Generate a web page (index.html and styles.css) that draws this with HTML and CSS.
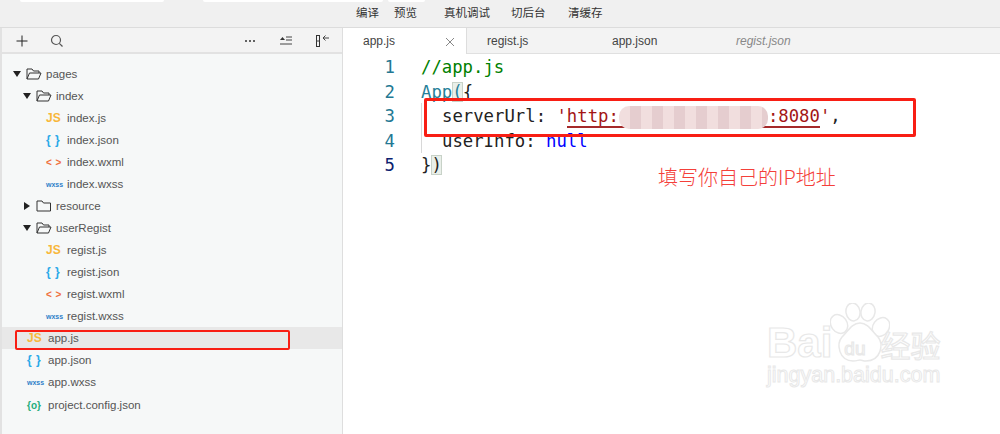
FILE: index.html
```html
<!DOCTYPE html>
<html lang="zh">
<head>
<meta charset="utf-8">
<title>app.js</title>
<link rel="stylesheet" href="styles.css">
</head>
<body>
<div class="app">
  <header class="topbar">
    <div class="top-stubs"><i class="stub s1"></i><i class="stub s2"></i><i class="stub s3"></i></div>
    <nav class="actions">
      <span class="a1">编译</span><span class="a2">预览</span><span class="a3">真机调试</span><span class="a4">切后台</span><span class="a5">清缓存</span>
    </nav>
  </header>
  <main class="main">
    <aside class="side">
      <div class="side-tools">
        <svg class="ic-plus" width="14" height="14" viewBox="0 0 14 14"><path d="M1.500 7h11M7 1.500v11" stroke="#222" fill="none"/></svg>
        <svg class="ic-search" width="14" height="14" viewBox="0 0 14 14"><circle cx="6" cy="6" r="4.500" stroke="#555" stroke-width="1.200" fill="none"/><path d="M9.300 9.300l3.200 3.200" stroke="#555" stroke-width="1.200" fill="none"/></svg>
        <span class="grow"></span>
        <svg class="ic-dots" width="10" height="4" viewBox="0 0 10 4"><path d="M0 2h2M4 2h2M8 2h2" stroke="#333" stroke-width="1.400" fill="none"/></svg>
        <svg class="ic-sort" width="13" height="10" viewBox="0 0 13 10"><path d="M0 4l2.500-3 2.500 3z" fill="#333"/><path d="M6 1h6M6 4h6M0 8h12" stroke="#444" fill="none"/></svg>
        <svg class="ic-col" width="14" height="14" viewBox="0 0 14 14"><rect x="0.500" y="1.500" width="3" height="11" stroke="#333" fill="none"/><path d="M13 4H7M9.500 1.500L7 4l2.500 2.500M0.500 7h3" stroke="#444" fill="none"/></svg>
      </div>
      <ul class="tree">
        <li class="row l0"><svg class="caret" width="8" height="6" viewBox="0 0 8 6"><path d="M0 0h8L4 6z"/></svg><svg class="open" width="16" height="12" viewBox="0 0 16 12"><path d="M1 11V1h5l1.500 2H13v2M1 11h11.500L15 5H3.500L1 11z" stroke="#333" fill="none"/></svg><span>pages</span></li>
        <li class="row l1"><svg class="caret" width="8" height="6" viewBox="0 0 8 6"><path d="M0 0h8L4 6z"/></svg><svg class="open" width="16" height="12" viewBox="0 0 16 12"><path d="M1 11V1h5l1.500 2H13v2M1 11h11.500L15 5H3.500L1 11z" stroke="#333" fill="none"/></svg><span>index</span></li>
        <li class="row l2"><b class="fi js">JS</b><span>index.js</span></li>
        <li class="row l2"><b class="fi json">{ }</b><span>index.json</span></li>
        <li class="row l2"><b class="fi wxml">&lt; &gt;</b><span>index.wxml</span></li>
        <li class="row l2"><b class="fi wxss">wxss</b><span>index.wxss</span></li>
        <li class="row l1"><svg class="caret side-caret" width="6" height="8" viewBox="0 0 6 8"><path d="M0 0v8l6-4z"/></svg><svg class="open" width="16" height="12" viewBox="0 0 16 12"><path d="M1 11V1h5l1.500 2H14.500v8z" stroke="#333" fill="none"/></svg><span>resource</span></li>
        <li class="row l1"><svg class="caret" width="8" height="6" viewBox="0 0 8 6"><path d="M0 0h8L4 6z"/></svg><svg class="open" width="16" height="12" viewBox="0 0 16 12"><path d="M1 11V1h5l1.500 2H13v2M1 11h11.500L15 5H3.500L1 11z" stroke="#333" fill="none"/></svg><span>userRegist</span></li>
        <li class="row l2"><b class="fi js">JS</b><span>regist.js</span></li>
        <li class="row l2"><b class="fi json">{ }</b><span>regist.json</span></li>
        <li class="row l2"><b class="fi wxml">&lt; &gt;</b><span>regist.wxml</span></li>
        <li class="row l2"><b class="fi wxss">wxss</b><span>regist.wxss</span></li>
        <li class="row l3 current"><b class="fi js">JS</b><span>app.js</span><i class="mark-side"></i></li>
        <li class="row l3"><b class="fi json">{ }</b><span>app.json</span></li>
        <li class="row l3"><b class="fi wxss">wxss</b><span>app.wxss</span></li>
        <li class="row l3 last"><b class="fi cfg">{o}</b><span>project.config.json</span></li>
      </ul>
    </aside>
    <section class="editor">
      <div class="tabs">
        <div class="tab active"><span>app.js</span><svg width="10" height="10" viewBox="0 0 10 10"><path d="M1 1l8 8M9 1l-8 8" stroke="#888" fill="none"/></svg></div>
        <div class="tab t2">regist.js</div>
        <div class="tab t3">app.json</div>
        <div class="tab t4">regist.json</div>
      </div>
      <div class="code">
        <div class="line"><span class="num n1">1</span><code class="cmt">//app.js</code></div>
        <div class="line"><span class="num n2">2</span><code class="fn">App<span class="br">(</span><span class="brace">{</span></code></div>
        <div class="line"><span class="num n3">3</span><code class="ind">serverUrl: <span class="str">'<span class="url">http:<span class="blur"></span>:8080</span>'</span>,</code></div>
        <div class="line"><span class="num n4">4</span><code class="ind">userInfo: <span class="kw">null</span></code></div>
        <div class="line"><span class="num n5">5</span><code>}<span class="br">)</span></code></div>
        <i class="guide"></i>
        <i class="mark-code"></i>
        <p class="note">填写你自己的IP地址</p>
      </div>
      <div class="wm">
        <svg class="wm-paw" width="60" height="62" viewBox="0 0 60 62">
          <g fill="#fff" stroke="#e8e8e8" stroke-width="1.500">
            <ellipse cx="9" cy="21" rx="8" ry="10" transform="rotate(-35 9 21)"/>
            <ellipse cx="23" cy="9" rx="7" ry="9" transform="rotate(-10 23 9)"/>
            <ellipse cx="38" cy="9" rx="7" ry="9" transform="rotate(10 38 9)"/>
            <ellipse cx="51" cy="24" rx="8" ry="10" transform="rotate(35 51 24)"/>
            <path d="M30 20c8 0 12 8 18 14 6 7 3 24-12 24-3 0-4-1-6-1s-3 1-7 1C9 58 6 41 12 34c6-6 10-14 18-14z"/>
          </g>
        </svg>
        <div class="wm-logo"><span class="wm-bai">Bai</span><span class="du">du</span><span class="wm-cn">经验</span></div>
        <div class="wm-url">jingyan.baidu.com</div>
      </div>
    </section>
  </main>
</div>
</body>
</html>
```
FILE: styles.css
```css
* { box-sizing: border-box; margin: 0; padding: 0; }
html, body { width: 1000px; height: 434px; overflow: hidden; background: #fff; }
body { font-family: "Liberation Sans", "Noto Sans CJK SC", sans-serif; color: #444; }
.app { display: flex; flex-direction: column; width: 1000px; height: 434px; }

.topbar { height: 28px; background: #f0f0f0; border-bottom: 1px solid #dcdcdc; position: relative; flex: none; }
.top-stubs { display: flex; padding-left: 20px; }
.stub { display: block; height: 2px; background: #fff; border-radius: 0 0 3px 3px; }
.s1 { width: 144px; }
.s2 { width: 180px; margin-left: 39px; }
.s3 { width: 37px; margin-left: 5px; }
.actions { position: absolute; top: 5px; left: 356px; display: flex; font-size: 11.500px; line-height: 15px; color: #333; font-family: "Noto Sans CJK SC", sans-serif; }
.a1 { width: 38px; }
.a2 { width: 50px; }
.a3 { width: 67px; }
.a4 { width: 57px; }

.main { display: flex; flex: 1; min-height: 0; }
.side { width: 343px; flex: none; background: #f6f8f8; border-left: 2px solid #e2e2e2; border-right: 1px solid #dedede; }
.side-tools { display: flex; align-items: center; height: 26px; background: #f3f3f3; border-bottom: 2px solid #e2e2e2; padding: 2px 12px 0 13px; }
.ic-search { margin-left: 21px; }
.grow { flex: 1; }
.ic-sort { margin-left: 25px; }
.ic-col { margin-left: 23px; }
.tree { list-style: none; padding-top: 9px; }
.row { display: flex; align-items: center; height: 22px; font-size: 11.500px; color: #555; position: relative; white-space: nowrap; }
.row.l0 { padding-left: 11px; }
.row.l1 { padding-left: 21px; }
.row.l2 { padding-left: 44px; }
.row.l3 { padding-left: 25px; }
.row.last { top: 1px; }
.caret { margin-right: 5px; fill: #222; flex: none; }
.side-caret { margin-left: 1px; margin-right: 6px; }
.open { margin-right: 4px; flex: none; }
.fi { display: inline-block; width: 19px; margin-right: 2px; font-weight: 700; text-align: left; white-space: nowrap; font-size: 11px; }
.js { color: #f8b73a; font-size: 12px; }
.json { color: #2aa9e8; font-size: 12px; letter-spacing: 0.500px; }
.wxml { color: #f0703c; font-size: 10px; letter-spacing: 0.500px; }
.wxss { color: #2f7fc9; font-size: 7px; }
.cfg { color: #1fae7c; font-size: 10px; }
.current { background: #e8e8e8; }
.mark-side { position: absolute; left: 13px; top: 3px; width: 275px; height: 20px; border: 2px solid #f81e14; border-radius: 2px; }

.editor { flex: 1; position: relative; min-width: 0; background: #fff; }
.tabs { display: flex; height: 26px; background: #f3f3f3; border-bottom: 1px solid #e0e0e0; font-size: 12px; color: #444; }
.tab { height: 26px; line-height: 27px; flex: none; }
.tab.active { width: 124px; background: #fff; padding: 1px 11px 0 20px; display: flex; justify-content: space-between; align-items: center; border-right: 1px solid #ddd; }
.t2 { width: 125px; padding-left: 20px; }
.t3 { width: 124px; padding-left: 20px; }
.t4 { padding-left: 20px; font-style: italic; color: #888; }

.code { position: relative; padding-top: 1px; font-family: "DejaVu Sans Mono", monospace; font-size: 17.300px; line-height: 24.500px; }
.line { display: flex; height: 24.500px; }
.num { width: 52px; text-align: right; color: #237893; flex: none; margin-right: 26px; }
.n5 { color: #0b216f; }
.line code { font-family: inherit; white-space: pre; color: #222; }
.cmt { color: #008000 !important; }
.fn { color: #267f99 !important; }
.brace { color: #222; }
.ind { padding-left: 21px; }
.br { background: #e9efe9; outline: 1px solid #c8d2c8; outline-offset: -1px; }
.str { color: #a31515; }
.url { border-bottom: 2px solid #a52a2a; }
.kw { color: #0000ff; }
.blur { display: inline-block; width: 149px; height: 23px; margin-bottom: -2px; vertical-align: -5px; background: repeating-linear-gradient(90deg, #f1dede 0 11px, #e5cdcf 11px 22px); border-radius: 10px; }
.guide { position: absolute; left: 78px; top: 49px; width: 1px; height: 50px; background: #d8d8d8; }
.mark-code { position: absolute; left: 81px; top: 44px; width: 492px; height: 39px; border: 3px solid #f81e14; border-radius: 2px; }
.note { position: absolute; left: 315px; top: 109px; font-family: "Noto Sans CJK SC", sans-serif; font-size: 20px; font-weight: 300; line-height: 28px; color: #f4403a; white-space: nowrap; }

.wm { position: absolute; left: 424px; top: 275px; width: 180px; height: 85px; color: #fff; }
.wm-paw { position: absolute; left: 63px; top: 0; }
.wm-logo { position: absolute; left: 0; top: 19px; display: flex; align-items: baseline; white-space: nowrap; -webkit-text-stroke: 1.200px #e8e8e8; }
.wm-bai { font-size: 42px; line-height: 42px; font-weight: 700; }
.du { font-size: 19px; margin-left: 12px; position: relative; top: -2px; }
.wm-cn { font-size: 30px; margin-left: 15px; font-family: "Noto Sans CJK SC", sans-serif; }
.wm-url { position: absolute; left: 0; top: 60px; font-size: 21.500px; line-height: 24px; white-space: nowrap; -webkit-text-stroke: 1px #e8e8e8; }
```
